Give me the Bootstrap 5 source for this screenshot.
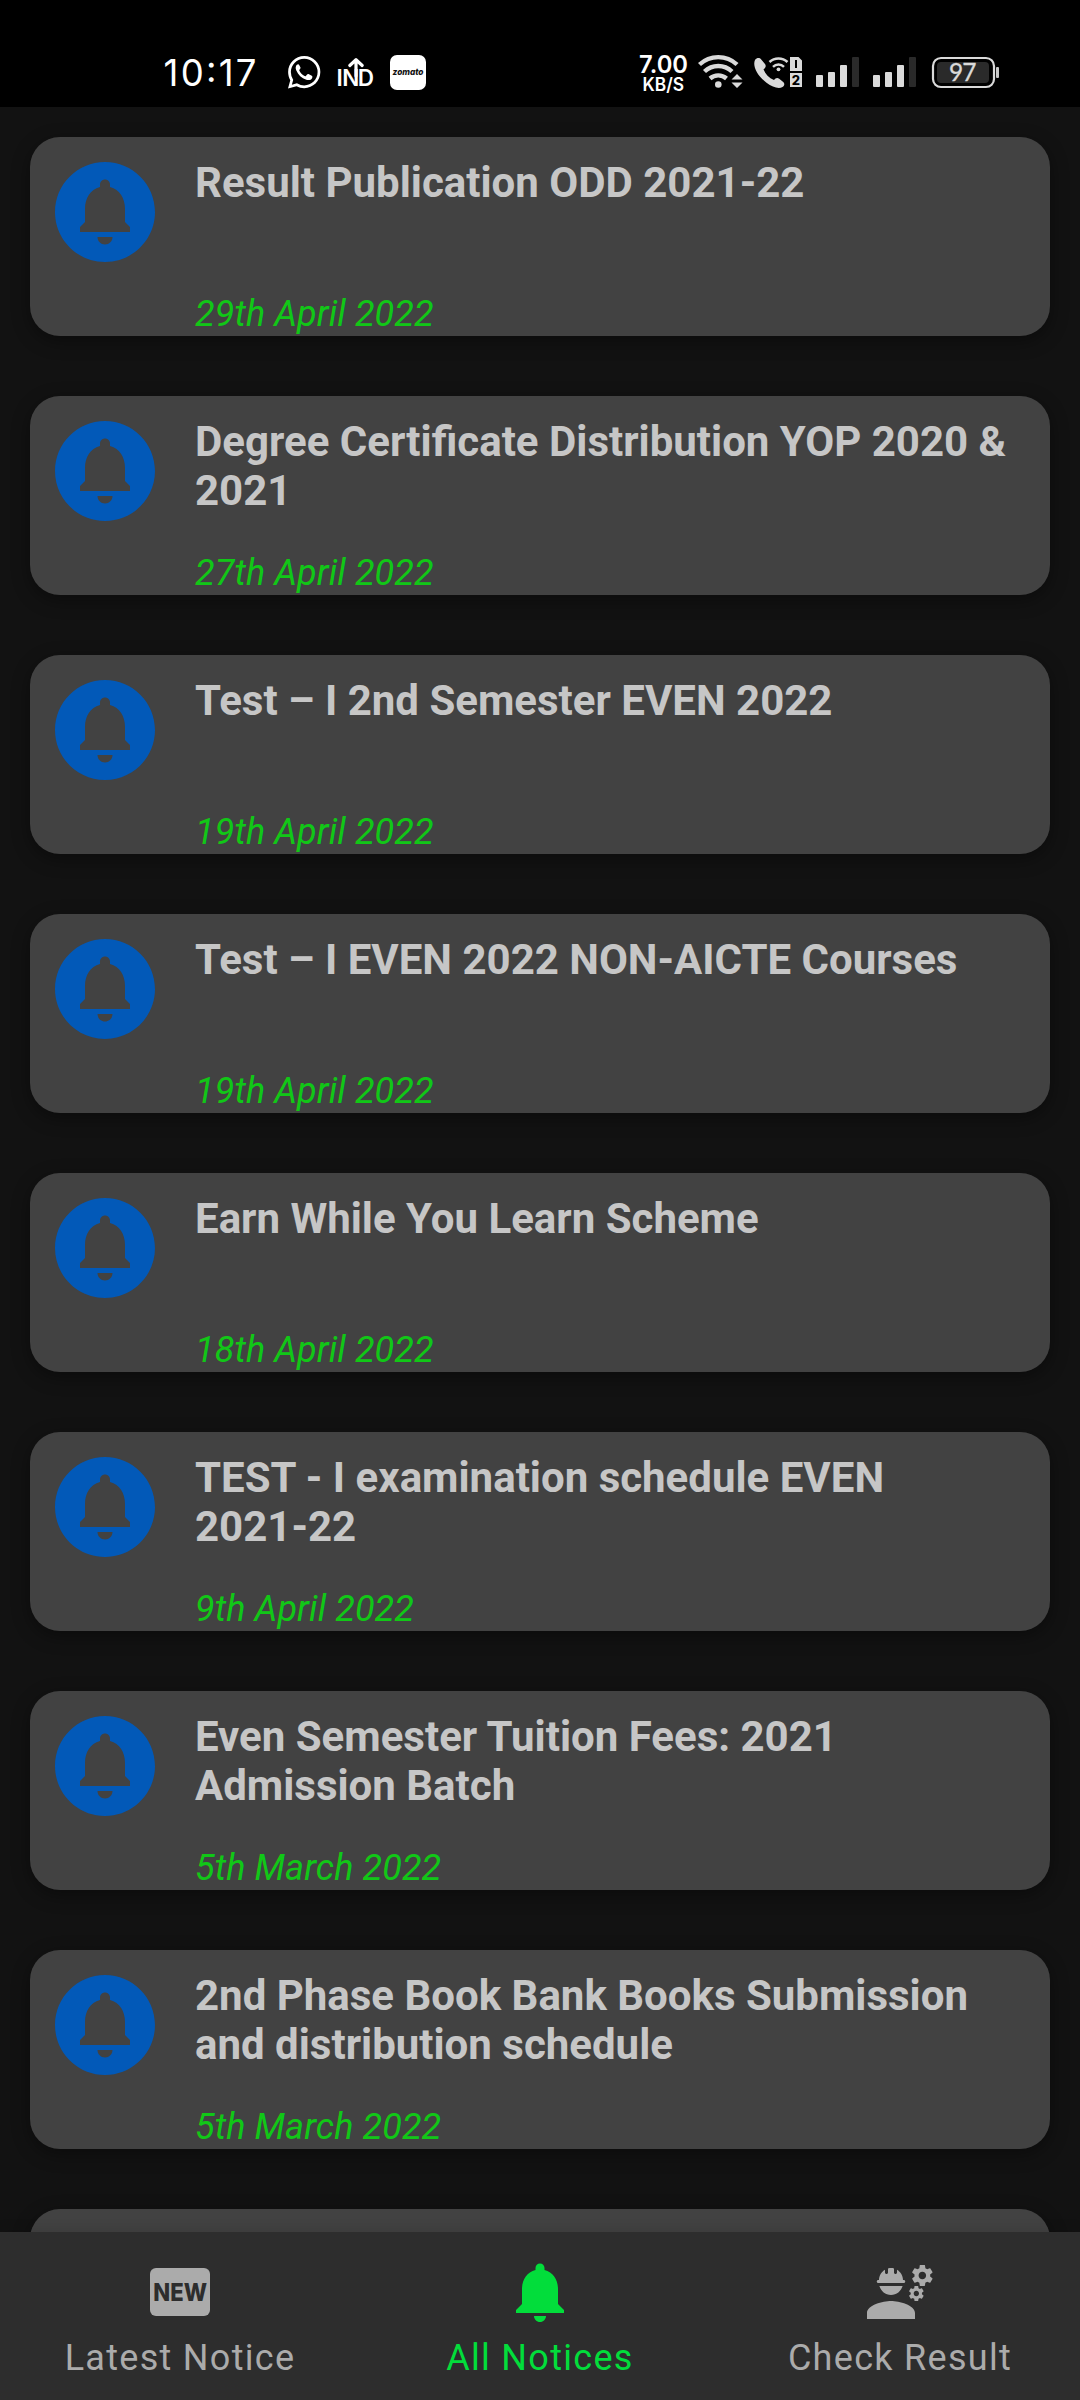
<!DOCTYPE html>
<html lang="en" data-bs-theme="dark">
<head>
<meta charset="utf-8">
<meta name="viewport" content="width=device-width, initial-scale=1">
<title>All Notices</title>
<link rel="stylesheet" href="https://cdn.jsdelivr.net/npm/bootstrap@5.3.0/dist/css/bootstrap.min.css">
<style>
  body { height: 2400px; background: #121212; font-family: Roboto, sans-serif; }
  .status-bar { height: 107px; background: #000; padding: 0 80px 0 155px; }
  .status-bar svg { height: 107px; flex: none; }
  .notice-list { min-height: 0; padding: 30px 30px 0; gap: 60px; }
  .notice { height: 199px; flex: none; padding: 0 20px 0 25px; background: #424242; border: 0; border-radius: 30px; box-shadow: 0 5px 18px rgba(0,0,0,.38); }
  .notice-icon { width: 100px; height: 100px; margin-top: 25px; flex: none; fill: #0259b8; }
  .notice-text { margin-left: 40px; padding: 21px 0 1px; }
  .notice-title { margin: 0; font-size: 42px; line-height: 49px; font-weight: 700; color: #c6c6c6; }
  .notice-date { font-size: 36px; line-height: 42px; font-style: italic; color: #11c717; letter-spacing: .1px; }
  .tab-bar { height: 168px; background: #2d2d2d; box-shadow: 0 -2px 12px rgba(0,0,0,.12); z-index: 1; flex: none; }
  .tab-bar .nav-link { padding: 24px 0 0; color: #ababab; font-size: 36px; line-height: 42px; letter-spacing: 1.3px; border-radius: 0; }
  .tab-bar .nav-link.active { color: #02dd3b; background: none; }
  .tab-bar svg { width: 72px; height: 72px; fill: currentColor; margin-bottom: 9px; }
</style>
<script src="https://cdn.jsdelivr.net/npm/bootstrap@5.3.0/dist/js/bootstrap.bundle.min.js"></script>
</head>
<body class="d-flex flex-column overflow-hidden">

<svg class="d-none">
  <symbol id="bell-circle" viewBox="2 2 20 20"><path d="M12 2C6.48 2 2 6.48 2 12s4.48 10 10 10 10-4.48 10-10S17.52 2 12 2zm0 16.5c-.83 0-1.5-.67-1.5-1.5h3c0 .83-.67 1.5-1.5 1.5zm5-2.5H7v-1l1-1v-2.61C8 9.27 9.03 7.47 11 7v-.5c0-.57.43-1 1-1s1 .43 1 1V7c1.97.47 3 2.28 3 4.39V14l1 1v1z"/></symbol>
  <symbol id="gear" viewBox="15.5 2.5 8 8"><path d="M22.1,6.84c0.01-0.11,0.02-0.22,0.02-0.34c0-0.12-0.01-0.23-0.03-0.34l0.74-0.58c0.07-0.05,0.08-0.15,0.04-0.22l-0.7-1.21c-0.04-0.08-0.14-0.1-0.21-0.08L21.1,4.42c-0.18-0.14-0.38-0.25-0.59-0.34l-0.13-0.93C20.36,3.06,20.29,3,20.2,3h-1.4c-0.09,0-0.16,0.06-0.17,0.15L18.5,4.08c-0.21,0.09-0.41,0.21-0.59,0.34l-0.87-0.35c-0.08-0.03-0.17,0-0.21,0.08l-0.7,1.21c-0.04,0.08-0.03,0.17,0.04,0.22l0.74,0.58c-0.02,0.11-0.03,0.23-0.03,0.34c0,0.11,0.01,0.23,0.03,0.34l-0.74,0.58c-0.07,0.05-0.08,0.15-0.04,0.22l0.7,1.21c0.04,0.08,0.14,0.1,0.21,0.08l0.87-0.35c0.18,0.14,0.38,0.25,0.59,0.34l0.13,0.93C18.64,9.94,18.71,10,18.8,10h1.4c0.09,0,0.16-0.06,0.17-0.15l0.13-0.93c0.21-0.09,0.41-0.21,0.59-0.34l0.87,0.35c0.08,0.03,0.17,0,0.21-0.08l0.7-1.21c0.04-0.08,0.03-0.17-0.04-0.22L22.1,6.84zM19.5,7.75c-0.69,0-1.25-0.56-1.25-1.25s0.56-1.25,1.25-1.25s1.25,0.56,1.25,1.25S20.19,7.75,19.5,7.75z"/></symbol>
</svg>

<header class="status-bar d-flex justify-content-between">
  <div class="d-flex">
    <svg width="125" viewBox="155 0 125 107"><text x="163.5" y="86" font-family="Inter, sans-serif" font-size="36.5" fill="#fff" textLength="93">10:17</text></svg>
    <svg width="50" viewBox="280 0 50 107"><g transform="translate(288 56) scale(2.03)" fill="#fff"><path d="M13.601 2.326A7.85 7.85 0 0 0 7.994 0C3.627 0 .068 3.558.064 7.926c0 1.399.366 2.76 1.057 3.965L0 16l4.204-1.102a7.9 7.9 0 0 0 3.79.965h.004c4.368 0 7.926-3.558 7.93-7.93A7.9 7.9 0 0 0 13.6 2.326zM7.994 14.521a6.6 6.6 0 0 1-3.356-.92l-.24-.144-2.494.654.666-2.433-.156-.251a6.56 6.56 0 0 1-1.007-3.505c0-3.626 2.957-6.584 6.591-6.584a6.56 6.56 0 0 1 4.66 1.931 6.56 6.56 0 0 1 1.928 4.66c-.004 3.639-2.961 6.592-6.592 6.592"/><path transform="translate(-.2 -.2)" d="M4.6 4.5c-.7.6-.8 1.700-.3 2.800.9 2.100 2.600 3.800 4.900 4.600 1.200.4 2.500.1 2.900-.9.200-.6.100-.9-.200-1.100l-1.600-.8c-.3-.1-.5 0-.7.2l-.6.700c-.2.2-.4.2-.6.1C7.200 9.500 6.300 8.500 5.800 7.500c-.1-.2 0-.4.1-.6.4-.4.600-.7.400-1.100L5.700 4.600c-.2-.5-.7-.5-1.100-.1z"/></g></svg>
    <svg width="55" viewBox="330 0 55 107"><text x="336.600 342.300 357.800" y="86.300" font-family="Inter, sans-serif" font-weight="600" font-size="22.500" fill="#fff">IND</text><path d="M356 76V61M349.800 65.500l6.200-5.700 6.200 5.700" fill="none" stroke="#fff" stroke-width="3.200" stroke-linecap="round" stroke-linejoin="round"/></svg>
    <svg width="45" viewBox="385 0 45 107"><rect x="390" y="55" width="36" height="35" rx="7" fill="#fff"/><text x="392.500" y="75" font-family="Inter, sans-serif" font-weight="800" font-style="italic" font-size="9" fill="#111" textLength="31" lengthAdjust="spacingAndGlyphs">zomato</text></svg>
  </div>
  <div class="d-flex">
    <svg width="60" viewBox="633 0 60 107" font-family="Inter, sans-serif" fill="#fff" font-weight="600"><text x="639" y="72.500" font-size="24" textLength="49" lengthAdjust="spacingAndGlyphs">7.00</text><text x="642.500" y="90.500" font-size="18.500" textLength="41.500" lengthAdjust="spacingAndGlyphs">KB/S</text></svg>
    <svg width="55" viewBox="693 0 55 107" fill="none" stroke="#dadada" stroke-width="4.400"><path d="M699.500 64.500a27.500 27.500 0 0 1 37.500 0M704.500 71.500a20 20 0 0 1 27.500 0M710 78.500a12.500 12.500 0 0 1 16.500 0"/><circle cx="718.300" cy="84.500" r="3.300" fill="#dadada" stroke="none"/><path d="M737 74l5.500 5.500h-11zM737 88l5.500-5.500h-11z" fill="#dadada" stroke="none"/></svg>
    <svg width="60" viewBox="748 0 60 107"><path d="M755 60c2-2.500 4.500-2.500 6.200-.5l3.800 4.500c1.500 2 .4 3.800-1.500 5.300 1.800 5 5.500 8.700 10.500 10.700 1.500-2 3.300-2.600 5.200-1.200l4 3.200c1.800 1.600 1.300 3.600-.7 5-4 2.300-10 0-16-4.300-8-6-14.500-16-11.500-22.700z" fill="#dadada"/><g fill="none" stroke="#dadada" stroke-width="2.500"><path d="M769.500 62a13 13 0 0 1 18 0M773 66.800a8 8 0 0 1 11 0"/></g><circle cx="778.500" cy="69.300" r="1.900" fill="#dadada"/><path d="M790 57h8.500l3.500 3.500V71h-12zM790 73h12v14h-12z" fill="#dadada"/><g font-family="Inter, sans-serif" font-weight="800" font-size="13" text-anchor="middle"><path d="M796 60v8" stroke="#000" stroke-width="2"/><text x="796" y="85" fill="#000">2</text></g></svg>
    <svg width="57" viewBox="808 0 57 107" fill="#dadada"><rect x="816" y="75" width="7" height="12" rx="1"/><rect x="828" y="72" width="7" height="15" rx="1"/><rect x="840" y="65" width="7" height="22" rx="1"/><rect x="852" y="57" width="7" height="30" rx="1" fill="#2a2a2a"/></svg>
    <svg width="57" viewBox="808 0 57 107" fill="#dadada"><rect x="816" y="75" width="7" height="12" rx="1"/><rect x="828" y="72" width="7" height="15" rx="1"/><rect x="840" y="65" width="7" height="22" rx="1"/><rect x="852" y="57" width="7" height="30" rx="1" fill="#2a2a2a"/></svg>
    <svg width="78" viewBox="922 0 78 107"><rect x="933" y="58" width="61" height="29" rx="8" fill="none" stroke="#dadada" stroke-width="2.200"/><rect x="937" y="62" width="52" height="21" rx="4" fill="#2a2a2a"/><rect x="996" y="67" width="3" height="11" rx="1" fill="#c8c8c8"/><text x="949" y="81" font-family="Lato, sans-serif" font-size="24.500" fill="#dadada" stroke="#dadada" stroke-width=".3" textLength="27.500">97</text></svg>
  </div>
</header>

<main class="notice-list d-flex flex-column flex-grow-1 overflow-hidden">
  <article class="notice card flex-row"><svg class="notice-icon"><use href="#bell-circle"/></svg><div class="notice-text d-flex flex-column justify-content-between flex-grow-1"><h2 class="notice-title">Result Publication ODD 2021-22</h2><time class="notice-date">29th April 2022</time></div></article>
  <article class="notice card flex-row"><svg class="notice-icon"><use href="#bell-circle"/></svg><div class="notice-text d-flex flex-column justify-content-between flex-grow-1"><h2 class="notice-title">Degree Certificate Distribution YOP 2020 &amp;<br>2021</h2><time class="notice-date">27th April 2022</time></div></article>
  <article class="notice card flex-row"><svg class="notice-icon"><use href="#bell-circle"/></svg><div class="notice-text d-flex flex-column justify-content-between flex-grow-1"><h2 class="notice-title">Test – I 2nd Semester EVEN 2022</h2><time class="notice-date">19th April 2022</time></div></article>
  <article class="notice card flex-row"><svg class="notice-icon"><use href="#bell-circle"/></svg><div class="notice-text d-flex flex-column justify-content-between flex-grow-1"><h2 class="notice-title">Test – I EVEN 2022 NON-AICTE Courses</h2><time class="notice-date">19th April 2022</time></div></article>
  <article class="notice card flex-row"><svg class="notice-icon"><use href="#bell-circle"/></svg><div class="notice-text d-flex flex-column justify-content-between flex-grow-1"><h2 class="notice-title">Earn While You Learn Scheme</h2><time class="notice-date">18th April 2022</time></div></article>
  <article class="notice card flex-row"><svg class="notice-icon"><use href="#bell-circle"/></svg><div class="notice-text d-flex flex-column justify-content-between flex-grow-1"><h2 class="notice-title">TEST - I examination schedule EVEN<br>2021-22</h2><time class="notice-date">9th April 2022</time></div></article>
  <article class="notice card flex-row"><svg class="notice-icon"><use href="#bell-circle"/></svg><div class="notice-text d-flex flex-column justify-content-between flex-grow-1"><h2 class="notice-title">Even Semester Tuition Fees: 2021<br>Admission Batch</h2><time class="notice-date">5th March 2022</time></div></article>
  <article class="notice card flex-row"><svg class="notice-icon"><use href="#bell-circle"/></svg><div class="notice-text d-flex flex-column justify-content-between flex-grow-1"><h2 class="notice-title">2nd Phase Book Bank Books Submission<br>and distribution schedule</h2><time class="notice-date">5th March 2022</time></div></article>
  <article class="notice card"></article>
</main>

<nav class="tab-bar nav nav-pills nav-fill flex-nowrap">
  <a class="nav-link col-4 d-flex flex-column align-items-center" href="#">
    <svg viewBox="0 0 24 24"><rect x="2" y="4" width="20" height="16" rx="2"/><text x="3.100" y="15" font-family="Inter, sans-serif" font-weight="800" font-size="8.250" letter-spacing="0" fill="#2d2d2d" textLength="17.900" lengthAdjust="spacingAndGlyphs">NEW</text></svg>
    Latest Notice
  </a>
  <a class="nav-link active col-4 d-flex flex-column align-items-center" href="#">
    <svg viewBox="0 0 24 24"><path d="M12 22c1.100 0 2-.9 2-2h-4c0 1.100.89 2 2 2zm6-6v-5c0-3.070-1.640-5.640-4.500-6.320V4c0-.83-.67-1.500-1.500-1.500s-1.500.67-1.500 1.500v.68C7.630 5.360 6 7.920 6 11v5l-2 2v1h16v-1l-2-2z"/></svg>
    All Notices
  </a>
  <a class="nav-link col-4 d-flex flex-column align-items-center" href="#">
    <svg viewBox="0 0 24 24"><path d="M9,15c-2.670,0-8,1.340-8,4v2h16v-2C17,16.340,11.670,15,9,15zM9,13c1.860,0,3.410-1.280,3.860-3H5.140C5.590,11.720,7.140,13,9,13zM4.750,9h8.500c0.280,0,0.500-0.220,0.500-0.500S13.530,8,13.250,8H13c0-1.480-0.810-2.750-2-3.450V5.500C11,5.780,10.780,6,10.500,6S10,5.780,10,5.500V4.140C9.680,4.060,9.350,4,9,4S8.320,4.060,8,4.140V5.500C8,5.780,7.780,6,7.500,6S7,5.780,7,5.500V4.550C5.810,5.250,5,6.520,5,8H4.750C4.470,8,4.250,8.220,4.250,8.500S4.470,9,4.750,9z"/><use href="#gear" x="15.450" y="2.500" width="8" height="8"/><use href="#gear" x="14.600" y="9.650" width="5.700" height="5.700"/></svg>
    Check Result
  </a>
</nav>
</body>
</html>
